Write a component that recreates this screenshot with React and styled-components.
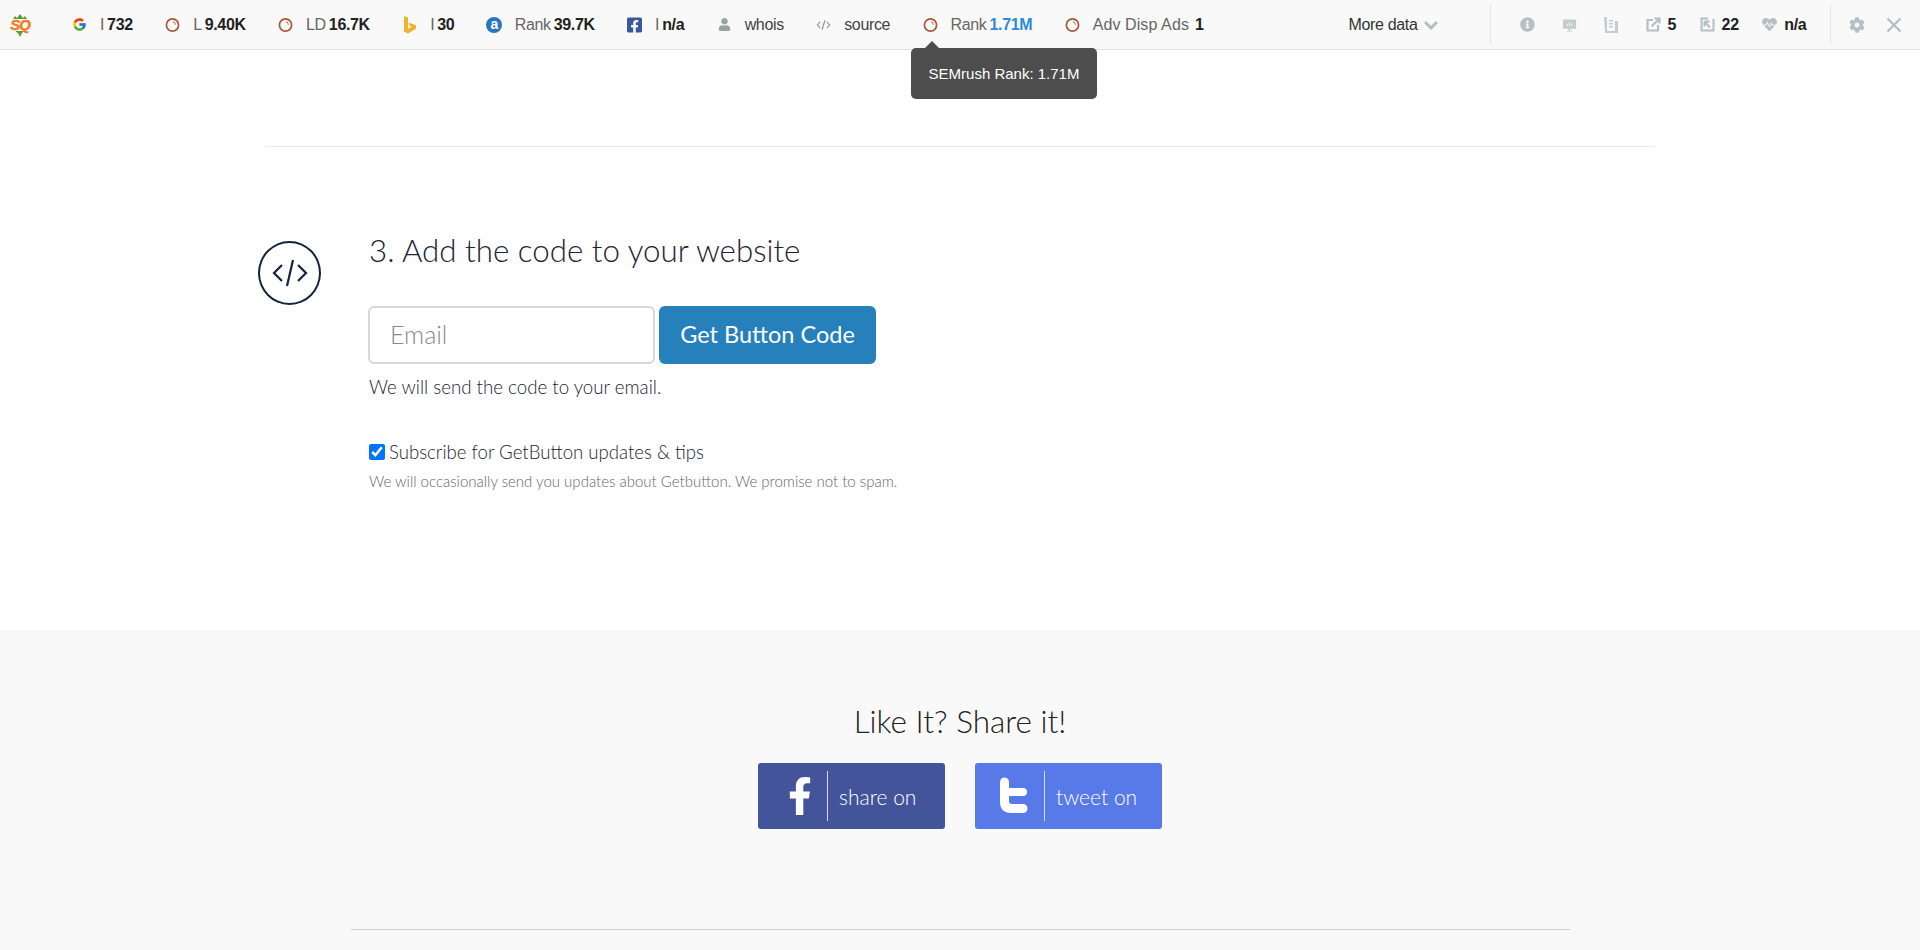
import React from 'react'
import styled, { createGlobalStyle } from 'styled-components'
import { FcGoogle } from 'react-icons/fc'
import { FaFacebookSquare, FaUser, FaInfoCircle, FaCog, FaHeartbeat, FaFacebookF } from 'react-icons/fa'

const GlobalStyle = createGlobalStyle`
    html, body {
        margin: 0;
        padding: 0;
        background: #fff;
        overflow: hidden;
    }
    * {
        box-sizing: border-box;
    }
`

const Page = styled.div`
    position: relative;
    height: 950px;
    overflow: hidden;
    display: flex;
    flex-direction: column;
    font-family: Lato, "Liberation Sans", sans-serif;
`

const Toolbar = styled.header`
    height: 50px;
    flex: none;
    display: flex;
    align-items: center;
    background: #f9f9f9;
    border-bottom: 1px solid #e2e2e2;
    font-family: "Liberation Sans", Arial, sans-serif;
    font-size: 16px;
    letter-spacing: -0.35px;
    color: #666;
    padding-left: 10px;
`

const Logo = styled.div`
    position: relative;
    width: 20px;
    height: 26px;
    margin-right: 42px;
    display: flex;
    align-items: center;
    justify-content: center;
    font-family: "Liberation Sans", Arial, sans-serif;
    font-size: 15px;
    font-weight: 700;
    font-style: italic;
    color: #f47a1f;
    letter-spacing: -1px;
    -webkit-text-stroke: .4px #f47a1f;
    svg {
        position: absolute;
        left: 0;
        top: 0;
    }
    span {
        position: relative;
    }
`

const Items = styled.div`
    display: flex;
    align-items: center;
    gap: 32.4px;
`

const Item = styled.div`
    display: flex;
    align-items: center;
    gap: 13px;
    white-space: nowrap;
`

const IconBox = styled.span`
    width: 15px;
    height: 16px;
    display: flex;
    align-items: center;
    justify-content: center;
    flex: none;
`

const Label = styled.span`
    color: ${p => p.$dark ? '#444' : '#666'};
    letter-spacing: ${p => p.$wide ? '0.1px' : 'inherit'};
`

const Value = styled.b`
    color: ${p => p.$blue ? '#2c8ad8' : '#222'};
    margin-left: ${p => p.$gap || 3}px;
`

const Alexa = styled.span`
    width: 16px;
    height: 16px;
    flex: none;
    border-radius: 50%;
    background: #2a75bb;
    color: #fff;
    font-size: 14px;
    font-weight: 700;
    line-height: 14px;
    text-align: center;
`

const MoreData = styled.div`
    margin-left: 145px;
    width: 141px;
    display: flex;
    align-items: center;
    gap: 7px;
    color: #333;
`

const Divider = styled.span`
    width: 1px;
    height: 41px;
    background: #e6e6e6;
    flex: none;
`

const Stats = styled.div`
    margin-left: 29px;
    display: flex;
    align-items: center;
    gap: 27px;
    width: 310px;
`

const Stat = styled.div`
    display: flex;
    align-items: center;
    gap: 7px;
    margin-right: -3.5px;
    b {
        color: #222;
    }
`

const Actions = styled.div`
    margin-left: 18px;
    display: flex;
    align-items: center;
    gap: 21px;
`

const Tooltip = styled.div`
    position: absolute;
    left: 911px;
    top: 48px;
    width: 186px;
    height: 51px;
    background: #4d4d4d;
    border-radius: 5px;
    color: #fff;
    font-family: "Liberation Sans", Arial, sans-serif;
    font-size: 15px;
    display: flex;
    align-items: center;
    justify-content: center;
    &::before {
        content: "";
        position: absolute;
        left: 14px;
        top: -7px;
        border-left: 7px solid transparent;
        border-right: 7px solid transparent;
        border-bottom: 7px solid #4d4d4d;
    }
`

const Main = styled.main`
    width: 1388px;
    height: 580px;
    flex: none;
    margin: 0 auto;
    padding-top: 96px;
`

const Rule = styled.hr`
    margin: 0;
    border: none;
    border-top: 1px solid #eaeaea;
`

const Step = styled.section`
    display: flex;
    margin-top: 83px;
    margin-left: -8px;
`

const StepIcon = styled.div`
    width: 63px;
    height: 64px;
    margin-top: 11px;
    border-radius: 50%;
    border: 2px solid #13233a;
    display: flex;
    align-items: center;
    justify-content: center;
    flex: none;
    margin-right: 48px;
`

const StepBody = styled.div`
    display: flex;
    flex-direction: column;
    align-items: flex-start;
`

const Heading = styled.h2`
    margin: 0;
    font-size: 31.3px;
    line-height: 40px;
    font-weight: 300;
    color: #1c2433;
`

const Form = styled.div`
    display: flex;
    gap: 4px;
    margin-top: 36px;
    margin-left: -1px;
`

const EmailInput = styled.input`
    width: 287px;
    height: 58px;
    border: 2px solid #d8d8d8;
    border-radius: 6px;
    padding: 0 20px 3px;
    font-family: inherit;
    font-size: 25px;
    font-weight: 300;
    background: #fff;
    outline: none;
    &::placeholder {
        color: #8a8a8a;
    }
`

const SubmitButton = styled.button`
    width: 217px;
    height: 58px;
    border: none;
    border-radius: 6px;
    padding: 0 0 2px;
    background: #2580bb;
    color: #fff;
    font-family: inherit;
    font-size: 23.5px;
    font-weight: 400;
`

const Hint = styled.p`
    margin: 11px 0 0;
    font-size: 18.7px;
    line-height: 24px;
    font-weight: 300;
    color: #1c2433;
`

const Subscribe = styled.label`
    display: flex;
    align-items: center;
    gap: 4px;
    margin-top: 41px;
    font-size: 18.6px;
    line-height: 24px;
    font-weight: 300;
    color: #1c2433;
    input {
        width: 16px;
        height: 16px;
        margin: 0;
    }
`

const Note = styled.p`
    margin: 7px 0 0;
    font-size: 15px;
    line-height: 20px;
    font-weight: 300;
    color: #666;
`

const Share = styled.section`
    flex: 1;
    background: #f9f9f9;
    display: flex;
    flex-direction: column;
    align-items: center;
    padding-top: 70px;
`

const ShareTitle = styled.h3`
    margin: 0;
    font-size: 31.5px;
    line-height: 42px;
    font-weight: 300;
    color: #222;
`

const ShareRow = styled.div`
    display: flex;
    gap: 30px;
    margin-top: 21px;
`

const ShareButton = styled.a`
    width: 187px;
    height: 66px;
    border-radius: 3px;
    background: ${p => p.$color};
    color: #fff;
    display: flex;
    align-items: center;
    font-family: Lato, "Liberation Sans", sans-serif;
    font-size: 21px;
    font-weight: 300;
`

const ShareGlyph = styled.span`
    width: 69px;
    display: flex;
    justify-content: flex-end;
    padding-right: ${p => p.$pad}px;
`

const ShareLine = styled.span`
    width: 1px;
    height: 50px;
    background: rgba(255, 255, 255, .75);
    margin-right: 11px;
`

const BottomRule = styled.hr`
    width: 1219px;
    margin: 100px 0 0;
    border: none;
    border-top: 1px solid #cfcfcf;
`

const Clock = () => (
    <svg width="16" height="16" viewBox="0 0 16 16" fill="none">
        <circle cx="8" cy="8" r="6.500" stroke="#a9563a" strokeWidth="1.800" />
        <path d="M8.500 4.200c1.600.6 2.500 1.800 2.600 3.600" stroke="#b87a62" strokeWidth="1.200" />
    </svg>
)

const Bing = () => (
    <svg width="14" height="18" viewBox="0 0 14 18">
        <path d="M1 0l4 1.400v11.400l3.600-2.100-1.900-.9-1.100-3L13 9.200v3.600L5 17.500 1 15.200z" fill="#efb12e" />
    </svg>
)

const CodeMini = () => (
    <svg width="16" height="16" viewBox="0 0 16 16" fill="none" stroke="#7d868a" strokeWidth="1.100">
        <path d="M4.500 4.500L1.500 8l3 3.500M11.500 4.500l3 3.500-3 3.500M9.500 3L6.500 13" />
    </svg>
)

const Chevron = () => (
    <svg width="14" height="10" viewBox="0 0 14 10" fill="none" stroke="#b4bfc2" strokeWidth="3">
        <path d="M1 2l6 6 6-6" />
    </svg>
)

const Monitor = () => (
    <svg width="16" height="16" viewBox="0 0 16 16">
        <path d="M1 2h14v10H9v2h2v1H5v-1h2v-2H1z" fill="#c3cdd0" />
        <path d="M5 9V7h1v2zM7.500 9V5h1v4zM10 9V6.500h1V9z" fill="#f9f9f9" />
    </svg>
)

const Beaker = () => (
    <svg width="14" height="16" viewBox="0 0 14 16">
        <path d="M0 0h3v14h8V4h3v12H1z" fill="#c3cdd0" />
        <path d="M5 6h4v1.500H5zM5 9h4v1.500H5zM5 3h4v1.500H5z" fill="#c3cdd0" />
    </svg>
)

const Outbound = () => (
    <svg width="15" height="15" viewBox="0 0 15 15" fill="none" stroke="#b4c0c4" strokeWidth="2.200">
        <path d="M7 3H1.500v10.500H12V8M5.500 9.500L13 2M8.500 1.500h5v5" />
    </svg>
)

const Backlinks = () => (
    <svg width="15" height="15" viewBox="0 0 15 15" fill="none" stroke="#b4c0c4" strokeWidth="2">
        <path d="M13.500 2v11.500h-12v-12H8M4.500 4.500l5.500 6M4.500 4.500v5M4.500 4.500h5" />
    </svg>
)

const Close = () => (
    <svg width="16" height="16" viewBox="0 0 16 16" stroke="#b4c0c4" strokeWidth="2.400">
        <path d="M1.500 1.500l13 13M14.500 1.500l-13 13" />
    </svg>
)

const Tweet = () => (
    <svg width="30" height="38" viewBox="0 0 30 38">
        <path d="M1 5a4.500 4.500 0 0 1 9 0v6h14a4 4 0 0 1 0 8H10v5c0 2 1 3 3 3h11a4.500 4.500 0 0 1 0 9H12C5 36 1 32 1 25z" fill="#fff" />
    </svg>
)

const metrics = [
    { icon: <FcGoogle size={17} />, label: 'I', value: '732' },
    { icon: <Clock />, label: 'L', value: '9.40K' },
    { icon: <Clock />, label: 'LD', value: '16.7K' },
    { icon: <Bing />, label: 'I', value: '30' },
    { icon: <Alexa>a</Alexa>, label: 'Rank', value: '39.7K' },
    { icon: <FaFacebookSquare size={18} color="#3b5998" />, label: 'I', value: 'n/a' },
    { icon: <FaUser size={13} color="#97a39f" />, label: 'whois', dark: true },
    { icon: <CodeMini />, label: 'source', dark: true },
    { icon: <Clock />, label: 'Rank', value: '1.71M', blue: true },
    { icon: <Clock />, label: 'Adv Disp Ads', value: '1', gap: 6, wide: true },
]

const App = () => {
    return (
        <Page>
            <GlobalStyle />
            <Toolbar>
                <Logo>
                    <svg width="20" height="26" viewBox="0 0 20 26">
                        <path d="M3 7l2-3 2 2 3-4 3 4 2-2 2 3zM6 19h8l-2 2-2 4-2-4-2-1z" fill="#5d9c32" />
                    </svg>
                    <span>SQ</span>
                </Logo>
                <Items>
                    {metrics.map((m, i) => (
                        <Item key={i}>
                            <IconBox>{m.icon}</IconBox>
                            <span>
                                <Label $dark={m.dark} $wide={m.wide}>{m.label}</Label>
                                {m.value && <Value $blue={m.blue} $gap={m.gap}>{m.value}</Value>}
                            </span>
                        </Item>
                    ))}
                </Items>
                <MoreData>More data <Chevron /></MoreData>
                <Divider />
                <Stats>
                    <IconBox><FaInfoCircle size={15} color="#b4c0c4" /></IconBox>
                    <IconBox><Monitor /></IconBox>
                    <IconBox><Beaker /></IconBox>
                    <Stat><Outbound /><b>5</b></Stat>
                    <Stat><Backlinks /><b>22</b></Stat>
                    <Stat><FaHeartbeat size={15} color="#b4c0c4" /><b>n/a</b></Stat>
                </Stats>
                <Divider />
                <Actions>
                    <FaCog size={16} color="#b4c0c4" />
                    <Close />
                </Actions>
            </Toolbar>
            <Tooltip>SEMrush Rank: 1.71M</Tooltip>
            <Main>
                <Rule />
                <Step>
                    <StepIcon>
                        <svg width="36" height="30" viewBox="0 0 36 30" fill="none" stroke="#13233a" strokeWidth="2.200">
                            <path d="M10 7l-8 8 8 8M26 7l8 8-8 8M21 2l-6 26" />
                        </svg>
                    </StepIcon>
                    <StepBody>
                        <Heading>3. Add the code to your website</Heading>
                        <Form>
                            <EmailInput placeholder="Email" />
                            <SubmitButton>Get Button Code</SubmitButton>
                        </Form>
                        <Hint>We will send the code to your email.</Hint>
                        <Subscribe>
                            <input type="checkbox" defaultChecked />
                            Subscribe for GetButton updates &amp; tips
                        </Subscribe>
                        <Note>We will occasionally send you updates about Getbutton. We promise not to spam.</Note>
                    </StepBody>
                </Step>
            </Main>
            <Share>
                <ShareTitle>Like It? Share it!</ShareTitle>
                <ShareRow>
                    <ShareButton $color="#44549b">
                        <ShareGlyph $pad={8}><FaFacebookF size={38} /></ShareGlyph>
                        <ShareLine />
                        share on
                    </ShareButton>
                    <ShareButton $color="#5879e8">
                        <ShareGlyph $pad={15}><Tweet /></ShareGlyph>
                        <ShareLine />
                        tweet on
                    </ShareButton>
                </ShareRow>
                <BottomRule />
            </Share>
        </Page>
    )
}

export default App
